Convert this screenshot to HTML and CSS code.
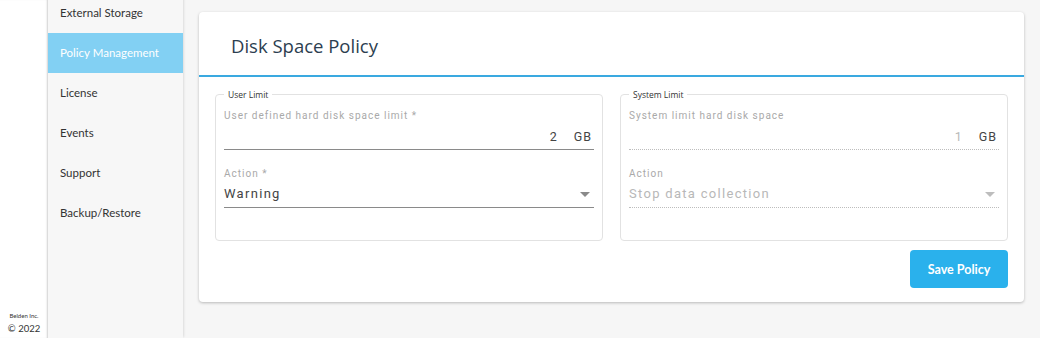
FILE: index.html
```html
<!DOCTYPE html>
<html lang="en">
<head>
    <meta charset="UTF-8">
    <meta name="viewport" content="width=device-width, initial-scale=1.0">
    <title>Disk Space Policy</title>
    <link rel="stylesheet" href="styles.css">
</head>
<body>
    <div class="app">
        <div class="rail">
            <div class="copy">
                <div class="copy-name">Belden Inc.</div>
                <div class="copy-year">&copy; 2022</div>
            </div>
        </div>
        <nav class="sidebar">
            <a class="nav-item">External Storage</a>
            <a class="nav-item active">Policy Management</a>
            <a class="nav-item">License</a>
            <a class="nav-item">Events</a>
            <a class="nav-item">Support</a>
            <a class="nav-item">Backup/Restore</a>
        </nav>
        <main class="main">
            <div class="card">
                <div class="card-header">
                    <h2>Disk Space Policy</h2>
                </div>
                <div class="card-body">
                    <div class="limits">
                        <fieldset class="limit">
                            <legend>User Limit</legend>
                            <div class="field">
                                <div class="field-label">User defined hard disk space limit *</div>
                                <div class="field-input">
                                    <span class="value">2</span>
                                    <span class="unit">GB</span>
                                </div>
                            </div>
                            <div class="field">
                                <div class="field-label">Action *</div>
                                <div class="field-input">
                                    <span class="select-text">Warning</span>
                                    <span class="caret"></span>
                                </div>
                            </div>
                        </fieldset>
                        <fieldset class="limit disabled">
                            <legend>System Limit</legend>
                            <div class="field">
                                <div class="field-label">System limit hard disk space</div>
                                <div class="field-input">
                                    <span class="value">1</span>
                                    <span class="unit">GB</span>
                                </div>
                            </div>
                            <div class="field">
                                <div class="field-label">Action</div>
                                <div class="field-input">
                                    <span class="select-text">Stop data collection</span>
                                    <span class="caret"></span>
                                </div>
                            </div>
                        </fieldset>
                    </div>
                    <div class="actions">
                        <button type="button" class="btn-save">Save Policy</button>
                    </div>
                </div>
            </div>
        </main>
    </div>
</body>
</html>
```

FILE: styles.css
```css
html, body { margin: 0; height: 100%; }
body { font-family: Lato, "Open Sans", sans-serif; background: #f6f6f6; color: #333; }
.app { display: flex; height: 338px; overflow: hidden; }

.rail { width: 48px; background: #fff; display: flex; flex-direction: column; justify-content: flex-end; align-items: center; padding-bottom: 1px; box-sizing: border-box; box-shadow: inset -2px 0 2px -1px #d0d0d0; }
.copy { text-align: center; color: #333; }
.copy-name { font-size: 6px; line-height: 10px; }
.copy-year { font-size: 9.5px; line-height: 16px; }

.sidebar { width: 135px; background: #f7f7f7; display: flex; flex-direction: column; margin-top: -7px; box-shadow: 2px 0 2px -1px #dcdcdc; }
.nav-item { display: block; height: 40px; line-height: 40px; padding-left: 12px; font-size: 11.5px; color: #333; }
.nav-item.active { background: #82d0f3; color: #fff; }

.main { flex: 1; padding: 12px 16px 0 16px; }
.card { background: #fff; border-radius: 4px; box-shadow: 0 1px 3px rgba(0,0,0,0.25); height: 290px; }
.card-header { height: 63px; border-bottom: 2px solid #3aa9e0; display: flex; align-items: center; padding-left: 32px; }
.card-header h2 { margin: 0; font-family: "Open Sans", sans-serif; font-weight: 400; font-size: 18.5px; color: #2c3e50; padding-top: 4px; }

.card-body { padding: 12px 16px 0 16px; }
.limits { display: flex; gap: 17px; }
.limit { flex: 1; margin: 0; height: 152px; box-sizing: border-box; border: 1px solid #e2e2e2; border-radius: 4px; padding: 10px 8px 0 8px; }
.limit legend { font-size: 8.5px; color: #333; padding: 0 4px; margin-left: 0; font-family: "Open Sans", sans-serif; }

.field { margin-bottom: 18px; font-family: Roboto, sans-serif; letter-spacing: 1px; }
.field-label { font-size: 10px; color: #a9a9a9; margin-bottom: 3px; }
.field-input { display: flex; align-items: center; height: 25px; border-bottom: 1px solid #8a8a8a; font-size: 12.5px; color: #444; }
.disabled .field-input { border-bottom: 1px dotted #bdbdbd; color: #b8b8b8; }
.value { flex: 1; text-align: right; padding-right: 16px; }
.unit { padding-right: 2px; color: #444; }
.select-text { flex: 1; font-size: 13px; letter-spacing: 1.3px; padding-bottom: 3px; }
.caret { width: 0; height: 0; border-left: 5px solid transparent; border-right: 5px solid transparent; border-top: 5px solid #8a8a8a; margin-right: 4px; }
.disabled .caret { border-top-color: #bdbdbd; }

.actions { display: flex; justify-content: flex-end; margin-top: 9px; }
.btn-save { width: 98px; height: 38px; background: #2ab1ec; color: #fff; border: none; border-radius: 4px; font-family: Lato, sans-serif; font-weight: 700; font-size: 12.5px; cursor: pointer; }
```
